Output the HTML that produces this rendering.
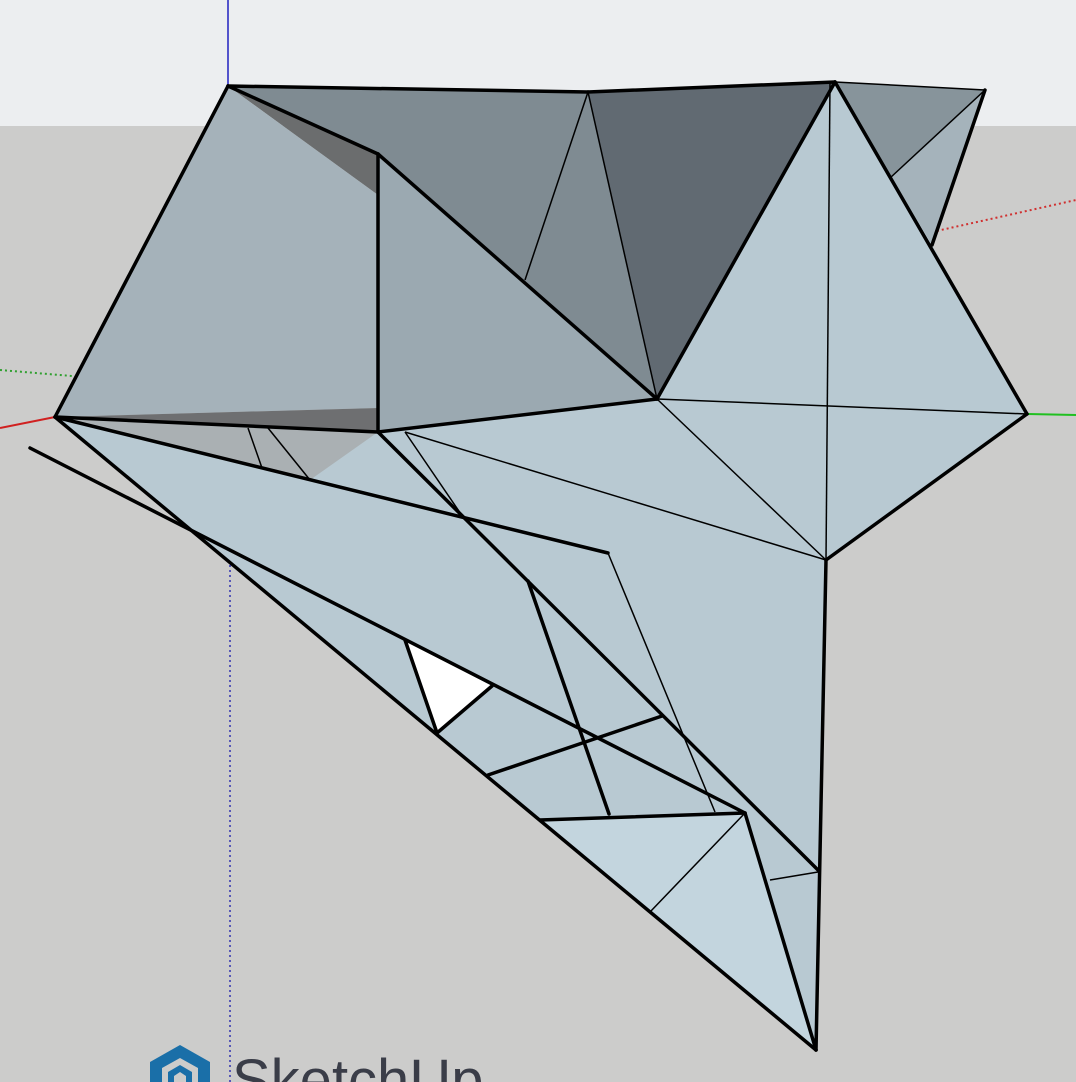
<!DOCTYPE html><html><head><meta charset="utf-8"><style>html,body{margin:0;padding:0;width:1076px;height:1082px;overflow:hidden;background:#cccccb}svg{display:block}</style></head><body>
<svg width="1076" height="1082" viewBox="0 0 1076 1082" xmlns="http://www.w3.org/2000/svg">
<rect width="1076" height="126" fill="#eceef0"/>
<rect y="126" width="1076" height="956" fill="#cccccb"/>
<line x1="228" y1="0" x2="228" y2="86" stroke="#2020c0" stroke-width="1.5"/>
<line x1="932" y1="232" x2="1076" y2="200" stroke="#d03030" stroke-width="2" stroke-dasharray="2,3"/>
<line x1="0" y1="428" x2="55" y2="417" stroke="#d02020" stroke-width="2"/>
<line x1="0" y1="370" x2="72" y2="376" stroke="#30a030" stroke-width="2" stroke-dasharray="2,3"/>
<line x1="975" y1="413" x2="1076" y2="415" stroke="#20c020" stroke-width="2"/>
<line x1="230" y1="560" x2="230" y2="1082" stroke="#3030b0" stroke-width="1.5" stroke-dasharray="2,3"/>
<g stroke-linejoin="round">
<polygon points="835,82 985,90 932,245 890,178" fill="#87949b"/>
<polygon points="890,178 985,90 932,245" fill="#a5b3bb"/>
<polygon points="228,86 588,92 657,399 378,154" fill="#7f8b92"/>
<polygon points="588,92 835,82 657,399" fill="#616a72"/>
<polygon points="228,86 378,154 378,195" fill="#6b6d6e"/>
<polygon points="228,86 378,195 378,408 55,417" fill="#a5b2ba"/>
<polygon points="378,154 378,432 657,399" fill="#9ba9b1"/>
<polygon points="835,82 657,399 826,560 1027,414 932,245" fill="#b8c9d2"/>
<polygon points="55,417 378,432 657,399 826,560 816,1050" fill="#b8c9d2"/>
<polygon points="55,417 378,408 378,432" fill="#6e6f71"/>
<polygon points="55,417 378,432 310,480" fill="#aab0b3"/>
<polygon points="540,820 745,813 816,1050" fill="#c3d5de"/>
<polygon points="405,640 492,686 437,733" fill="#ffffff"/>
</g>
<g stroke="#000" stroke-width="3.5" stroke-linecap="round" fill="none">
<line x1="228" y1="86" x2="55" y2="417"/>
<line x1="228" y1="86" x2="378" y2="154"/>
<line x1="228" y1="86" x2="588" y2="92"/>
<line x1="588" y1="92" x2="835" y2="82"/>
<line x1="985" y1="90" x2="932" y2="245"/>
<line x1="835" y1="82" x2="1027" y2="414"/>
<line x1="835" y1="82" x2="657" y2="399"/>
<line x1="1027" y1="414" x2="826" y2="560"/>
<line x1="826" y1="560" x2="816" y2="1050"/>
<line x1="378" y1="154" x2="378" y2="432"/>
<line x1="378" y1="154" x2="657" y2="399"/>
<line x1="378" y1="432" x2="657" y2="399"/>
<line x1="55" y1="417" x2="378" y2="432"/>
<line x1="55" y1="417" x2="816" y2="1050"/>
<line x1="30" y1="448" x2="745" y2="813"/>
<line x1="378" y1="432" x2="818" y2="870"/>
<line x1="55" y1="417" x2="608" y2="553"/>
<line x1="528" y1="581" x2="609" y2="814"/>
<line x1="488" y1="775" x2="662" y2="716"/>
<line x1="540" y1="820" x2="745" y2="813"/>
<line x1="405" y1="640" x2="437" y2="733"/>
<line x1="492" y1="686" x2="437" y2="733"/>
<line x1="745" y1="813" x2="816" y2="1050"/>
</g>
<g stroke="#000" stroke-width="1.5" fill="none">
<line x1="835" y1="82" x2="985" y2="90"/>
<line x1="985" y1="90" x2="890" y2="178"/>
<line x1="588" y1="92" x2="525" y2="280"/>
<line x1="588" y1="92" x2="657" y2="399"/>
<line x1="830" y1="82" x2="826" y2="560"/>
<line x1="657" y1="399" x2="1027" y2="414"/>
<line x1="657" y1="399" x2="826" y2="560"/>
<line x1="405" y1="432" x2="826" y2="560"/>
<line x1="405" y1="432" x2="465" y2="520"/>
<line x1="608" y1="553" x2="715" y2="812"/>
<line x1="248" y1="428" x2="262" y2="468"/>
<line x1="268" y1="428" x2="310" y2="480"/>
<line x1="770" y1="880" x2="818" y2="872"/>
<line x1="650" y1="912" x2="745" y2="813"/>
</g>
<g fill="#1a6fa8">
<path d="M150,1062 L180,1045 L210,1062 L210,1082 L198,1082 L198,1068 L180,1058 L162,1068 L162,1082 L150,1082Z"/>
<path d="M168,1082 L168,1072 L180,1065 L192,1072 L192,1082 L186,1082 L186,1076 L180,1072 L174,1076 L174,1082Z"/>
</g>
<text x="232" y="1100" font-family="Liberation Sans, sans-serif" font-size="58" fill="#3a3d48">SketchUp</text>
</svg>
</body></html>
